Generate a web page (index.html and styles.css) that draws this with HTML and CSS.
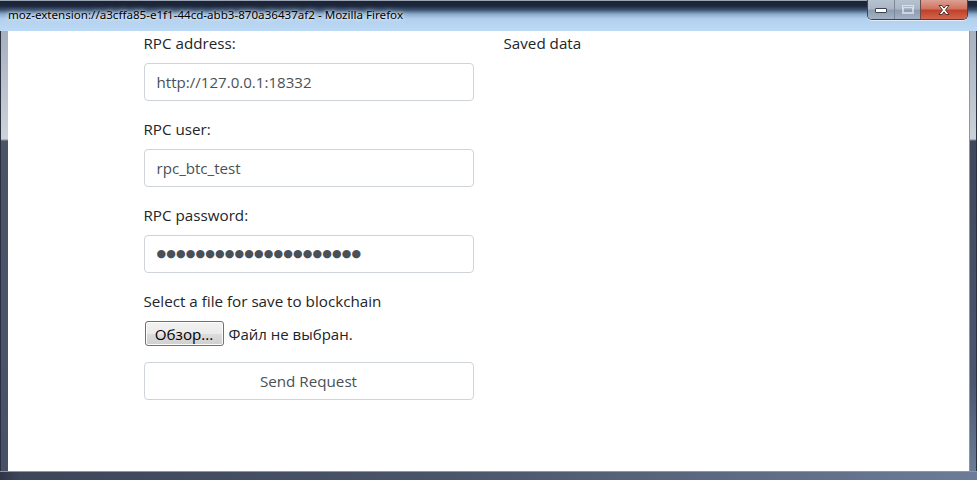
FILE: index.html
```html
<!DOCTYPE html>
<html lang="ru">
<head>
<meta charset="utf-8">
<title>moz-extension</title>
<link rel="stylesheet" href="styles.css">
</head>
<body>
<div class="window">
  <div class="titlebar">
    <span class="title">moz-extension://a3cffa85-e1f1-44cd-abb3-870a36437af2 - Mozilla Firefox</span>
    <div class="caption-buttons">
      <div class="cbtn cbtn-min">
        <svg width="14" height="8" viewBox="0 0 14 8"><rect x="1.5" y="2.5" width="11" height="4" rx="0.5" fill="#fff" stroke="#3b4252"/></svg>
      </div>
      <div class="cbtn cbtn-max">
        <svg width="14" height="11" viewBox="0 0 14 11"><rect x="1.5" y="1.5" width="11" height="8" fill="none" stroke="#fff" stroke-width="1"/><rect x="2.5" y="3.5" width="9" height="5" fill="none" stroke="#fff" stroke-width="1"/></svg>
      </div>
      <div class="cbtn cbtn-close">
        <svg width="16" height="12" viewBox="0 0 16 12"><path d="M3 1.5h3l2 2.6 2-2.6h3l-3.5 4.5 3.5 4.5h-3l-2-2.6-2 2.6h-3l3.5-4.5z" fill="#fff" stroke="#4a2a24" stroke-width="0.9" stroke-linejoin="round"/></svg>
      </div>
    </div>
  </div>
  <div class="middle">
    <div class="side side-left"></div>
    <div class="content">
      <div class="container">
        <div class="row">
          <div class="col">
            <div class="form-group">
              <label class="label">RPC address:</label>
              <input class="form-control" type="text" value="http://127.0.0.1:18332">
            </div>
            <div class="form-group">
              <label class="label">RPC user:</label>
              <input class="form-control" type="text" value="rpc_btc_test">
            </div>
            <div class="form-group">
              <label class="label">RPC password:</label>
              <div class="form-control password">●●●●●●●●●●●●●●●●●●●●●</div>
            </div>
            <div class="form-group">
              <label class="label">Select a file for save to blockchain</label>
              <div class="file-input">
                <span class="file-btn">Обзор...</span>
                <span class="file-name">Файл не выбран.</span>
              </div>
            </div>
            <button class="send-btn" type="button">Send Request</button>
          </div>
          <div class="col">
            <div class="label">Saved data</div>
          </div>
        </div>
      </div>
    </div>
    <div class="side side-right"></div>
  </div>
  <div class="frame-bottom"></div>
</div>
</body>
</html>
```

FILE: styles.css
```css
* { box-sizing: border-box; }
html, body { margin: 0; padding: 0; }
body {
  width: 977px;
  height: 480px;
  overflow: hidden;
  font-family: "Open Sans", "Noto Sans", sans-serif;
  background: #3e4a5f;
}
.window {
  display: flex;
  flex-direction: column;
  width: 977px;
  height: 480px;
}
.titlebar {
  height: 31px;
  flex: none;
  display: flex;
  align-items: flex-start;
  background: linear-gradient(to bottom, #9aa4b2 0, #9aa4b2 1px, #1b2335 1px, #1e283c 6px, #3d5573 10px, #89a9ca 14px, #b2d0ee 19px, #bddaf5 31px);
}
.title {
  font-family: "Noto Sans", "Open Sans", sans-serif;
  font-size: 11.6px;
  color: #000;
  margin: 7px 0 0 8px;
  line-height: 16px;
  text-shadow: 0 0 6px rgba(255,255,255,0.9), 0 0 3px rgba(255,255,255,0.8);
  white-space: nowrap;
}
.caption-buttons {
  margin-left: auto;
  margin-right: 9px;
  display: flex;
  height: 20px;
  border: 1px solid #3b4558;
  border-top: none;
  border-radius: 0 0 5px 5px;
  overflow: hidden;
  box-shadow: 0 1px 0 rgba(255,255,255,0.6);
}
.cbtn {
  display: flex;
  align-items: center;
  justify-content: center;
  height: 19px;
}
.cbtn-min {
  width: 27px;
  background: linear-gradient(to bottom, #b7c2d0 0, #aab6c6 45%, #8e9cb1 55%, #a4b2c4 100%);
  border-right: 1px solid #7c889a;
}
.cbtn-max {
  width: 26px;
  background: linear-gradient(to bottom, #b7c2d0 0, #aab6c6 45%, #8e9cb1 55%, #a4b2c4 100%);
  border-right: 1px solid #6b4a48;
}
.cbtn-max svg { opacity: 0.55; }
.cbtn-close {
  width: 46px;
  background: linear-gradient(to bottom, #dba093 0, #d0745f 45%, #c0412a 55%, #d2664e 100%);
}
.middle {
  flex: 1;
  display: flex;
  min-height: 0;
}
.side {
  width: 8px;
  flex: none;
}
.side-left {
  background: linear-gradient(to bottom, #a6b0be 0, #ccd3db 108px, #4c5568 110px, #485166 100%);
  border-left: 1px solid #2a3242;
}
.side-right {
  background: linear-gradient(to bottom, #a7b1bf 0, #cad1d9 108px, #3f485b 110px, #4a5670 80%, #6b7c97 100%);
  border-left: 1px solid #8c97a6;
  border-right: 1px solid #2a3242;
}
.frame-bottom {
  height: 9px;
  flex: none;
  background: linear-gradient(to right, #2e3546 0, #3d4659 2%, #4a5469 45%, #6c7c98 100%);
  border-top: 1px solid #8a96a8;
}
.content {
  flex: 1;
  background: #fff;
  color: #212529;
}
.container {
  max-width: 720px;
  margin: 0 auto;
  padding: 0 15px;
}
.row {
  display: flex;
  margin: 0 -15px;
}
.col {
  flex: 0 0 50%;
  max-width: 50%;
  padding: 0 15px;
}
.form-group {
  margin-bottom: 16px;
}
.label {
  display: block;
  font-size: 15.2px;
  line-height: 24px;
  margin-bottom: 8px;
  color: #212529;
}
.form-control {
  display: block;
  width: 100%;
  height: 38px;
  padding: 6px 12px;
  font-family: "Open Sans", "Noto Sans", sans-serif;
  font-size: 15.1px;
  line-height: 24px;
  color: #495057;
  background: #fff;
  border: 1px solid #ced4da;
  border-radius: 4px;
  outline: none;
}
.password {
  font-family: "DejaVu Sans", sans-serif;
  font-size: 11px;
  letter-spacing: 0.15px;
  color: #495057;
}
.file-input {
  display: flex;
  align-items: center;
  height: 25px;
  gap: 5px;
}
.file-btn {
  display: flex;
  align-items: center;
  justify-content: center;
  width: 79px;
  height: 25px;
  margin-left: 1px;
  font-size: 15.2px;
  color: #000;
  border: 1px solid #707070;
  border-radius: 3px;
  background: linear-gradient(to bottom, #f2f2f2 0, #ebebeb 50%, #dddddd 51%, #cfcfcf 100%);
  box-shadow: inset 0 0 0 1px #fcfcfc;
}
.file-name {
  font-size: 15px;
  color: #212529;
}
.send-btn {
  display: block;
  width: 100%;
  height: 38px;
  padding: 6px 12px;
  font-family: "Open Sans", "Noto Sans", sans-serif;
  font-size: 15.2px;
  line-height: 24px;
  color: #495057;
  background: #fff;
  border: 1px solid #ced4da;
  border-radius: 4px;
}
```
